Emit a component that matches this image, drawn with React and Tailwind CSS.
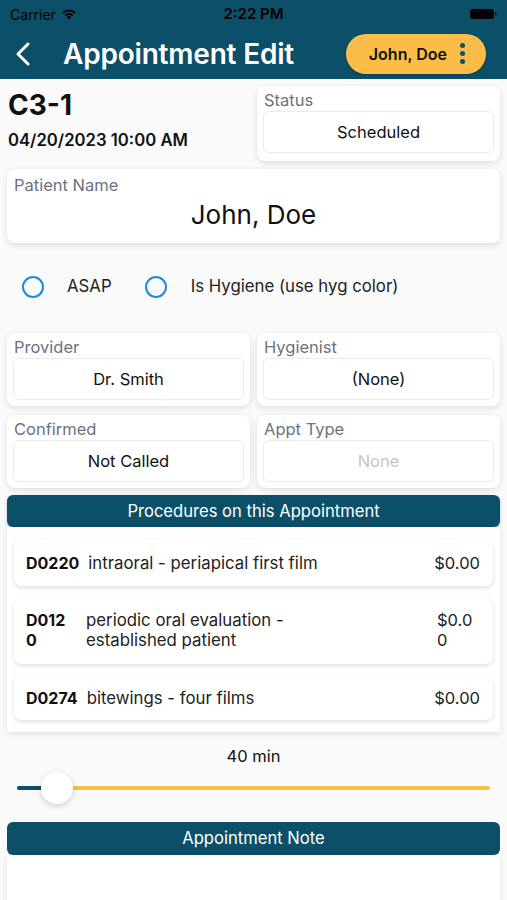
import React from 'react';

const font = { fontFamily: 'Inter, "Noto Sans", sans-serif' };

const Field = ({ label, value, muted, pb = 'pb-[6px]' }) => (
  <div className={`bg-white rounded-lg shadow-[0_2px_6px_rgba(0,0,0,0.12)] px-[6px] pt-[4px] ${pb}`}>
    <div className="text-[16.5px] leading-[20px] text-[#6b7280] pl-[1px]">{label}</div>
    <div className={`mt-[1px] h-[42px] rounded-md border border-[#ebebeb] flex items-center justify-center text-[16.5px] ${muted ? 'text-[#c4c4c4]' : 'text-[#111]'}`}>
      {value}
    </div>
  </div>
);

const Radio = () => (
  <span className="w-[22px] h-[22px] rounded-full border-[2.5px] border-[#1e88e5] inline-block" />
);

const ProcRow = ({ code, desc, price, h }) => (
  <div className={`bg-white rounded-lg shadow-[0_2px_5px_rgba(0,0,0,0.13)] flex items-center pl-[12px] pr-[13px] ${h}`}>
    <div className="font-bold text-[16px] leading-[20px] text-[#111] shrink-0">{code}</div>
    <div className="flex-1 text-[16.8px] leading-[20px] text-[#222] pl-[9px]">{desc}</div>
    <div className="text-[16.5px] leading-[20px] text-[#222] shrink-0">{price}</div>
  </div>
);

export default function App() {
  return (
    <div style={font} className="w-[507px] h-[900px] overflow-hidden bg-[#fafafa]">
      {/* Header */}
      <header className="bg-[#0c4f69] h-[79px]">
        <div className="h-[28px] relative flex items-center px-[10px] text-black">
          <span className="text-[14px] flex items-center gap-[5px]">
            Carrier
            <svg width="16" height="12" viewBox="0 0 16 12">
              <path d="M8 11.5 L10.2 9 A3.2 3.2 0 0 0 5.8 9 Z" fill="#000" />
              <path d="M3.6 6.8 A6.3 6.3 0 0 1 12.4 6.8 L11.1 8.2 A4.4 4.4 0 0 0 4.9 8.2 Z" fill="#000" />
              <path d="M1.2 4.4 A9.6 9.6 0 0 1 14.8 4.4 L13.5 5.8 A7.7 7.7 0 0 0 2.5 5.8 Z" fill="#000" />
            </svg>
          </span>
          <span className="absolute left-1/2 -translate-x-1/2 text-[15px] font-semibold">2:22 PM</span>
          <span className="ml-auto flex items-center">
            <span className="w-[24px] h-[10px] rounded-[3px] bg-black" />
            <span className="w-[2px] h-[4px] bg-black/60 ml-[1px] rounded-r" />
          </span>
        </div>
        <div className="h-[51px] flex items-center pl-[14px] pr-[21px]">
          <svg width="18" height="26" viewBox="0 0 18 26" className="mr-[31px]">
            <path d="M14 3 L4 13 L14 23" stroke="#fff" strokeWidth="3" fill="none" strokeLinecap="round" strokeLinejoin="round" />
          </svg>
          <h1 className="text-white text-[28px] font-semibold tracking-[-0.2px]">Appointment Edit</h1>
          <div className="ml-auto h-[40px] w-[140px] rounded-full bg-[#fbbd48] flex items-center justify-end pr-[21px] gap-[13px] shadow-[0_1px_3px_rgba(0,0,0,0.25)]">
            <span className="text-[16px] font-semibold text-[#111]">John, Doe</span>
            <span className="flex flex-col gap-[3px]">
              <span className="w-[5px] h-[5px] rounded-full bg-[#0c4f69]" />
              <span className="w-[5px] h-[5px] rounded-full bg-[#0c4f69]" />
              <span className="w-[5px] h-[5px] rounded-full bg-[#0c4f69]" />
            </span>
          </div>
        </div>
      </header>

      {/* Top */}
      <div className="grid grid-cols-2 gap-[7px] px-[7px] pt-[7px]">
        <div className="pl-[1px]">
          <div className="text-[28px] font-bold leading-[34px] text-[#111] mt-[2px]">C3-1</div>
          <div className="text-[16.7px] font-semibold text-[#111] mt-[6px]">04/20/2023 10:00 AM</div>
        </div>
        <Field label="Status" value="Scheduled" pb="pb-[8px]" />
      </div>

      <div className="px-[7px] pt-[8px]">
        <div className="bg-white rounded-lg shadow-[0_2px_6px_rgba(0,0,0,0.12)] h-[74px] px-[7px] pt-[6px]">
          <div className="text-[16.5px] leading-[20px] text-[#6b7280]">Patient Name</div>
          <div className="text-center text-[26px] leading-[32px] text-[#111] mt-[4px]">John, Doe</div>
        </div>
      </div>

      {/* Radios */}
      <div className="h-[90px] flex items-center pl-[22px] pb-[2px] text-[16.8px] text-[#222]">
        <Radio />
        <span className="ml-[23px]">ASAP</span>
        <span className="ml-[33px] flex items-center">
          <Radio />
        </span>
        <span className="ml-[24px]">Is Hygiene (use hyg color)</span>
      </div>

      {/* Providers */}
      <div className="grid grid-cols-2 gap-x-[7px] gap-y-[9px] px-[7px]">
        <Field label="Provider" value="Dr. Smith" />
        <Field label="Hygienist" value="(None)" />
        <Field label="Confirmed" value="Not Called" />
        <Field label="Appt Type" value="None" muted />
      </div>

      {/* Procedures */}
      <div className="px-[7px] pt-[7px]">
        <div className="h-[32px] rounded-md bg-[#0c4f69] text-white text-[16.6px] flex items-center justify-center shadow-[0_2px_4px_rgba(0,0,0,0.2)]">
          Procedures on this Appointment
        </div>
        <div className="bg-white shadow-[0_2px_6px_rgba(0,0,0,0.1)] px-[7px] pt-[13px] pb-[12px] flex flex-col gap-[12px]">
          <ProcRow h="h-[46px]" code="D0220" desc="intraoral - periapical first film" price="$0.00" />
          <div className="bg-white rounded-lg shadow-[0_2px_5px_rgba(0,0,0,0.13)] flex items-start pl-[12px] pr-[13px] h-[66px] pt-[12px] leading-[20px]">
            <div className="font-bold text-[16px] text-[#111] w-[60px] shrink-0">D012<br />0</div>
            <div className="flex-1 text-[16.8px] text-[#222]">periodic oral evaluation -<br />established patient</div>
            <div className="text-[16.5px] text-[#222] w-[43px] shrink-0">$0.0<br />0</div>
          </div>
          <ProcRow h="h-[44px]" code="D0274" desc="bitewings - four films" price="$0.00" />
        </div>
      </div>

      {/* Duration */}
      <div className="text-center text-[16.5px] text-[#111] mt-[12px]">40 min</div>
      <div className="relative h-[40px] mx-[17px] mt-[2px]">
        <div className="absolute left-0 right-0 top-[15px] h-[4px] rounded-full bg-[#fbbd48]" />
        <div className="absolute left-0 w-[26px] top-[15px] h-[4px] rounded-full bg-[#0c4f69]" />
        <div className="absolute left-[24px] top-[1px] w-[32px] h-[32px] rounded-full bg-white shadow-[0_2px_6px_rgba(0,0,0,0.18)]" />
      </div>

      {/* Note */}
      <div className="px-[7px] pt-[11px]">
        <div className="h-[33px] rounded-md bg-[#0c4f69] text-white text-[16.6px] flex items-center justify-center">
          Appointment Note
        </div>
        <div className="bg-white h-[80px] shadow-[0_2px_6px_rgba(0,0,0,0.1)]" />
      </div>
    </div>
  );
}
